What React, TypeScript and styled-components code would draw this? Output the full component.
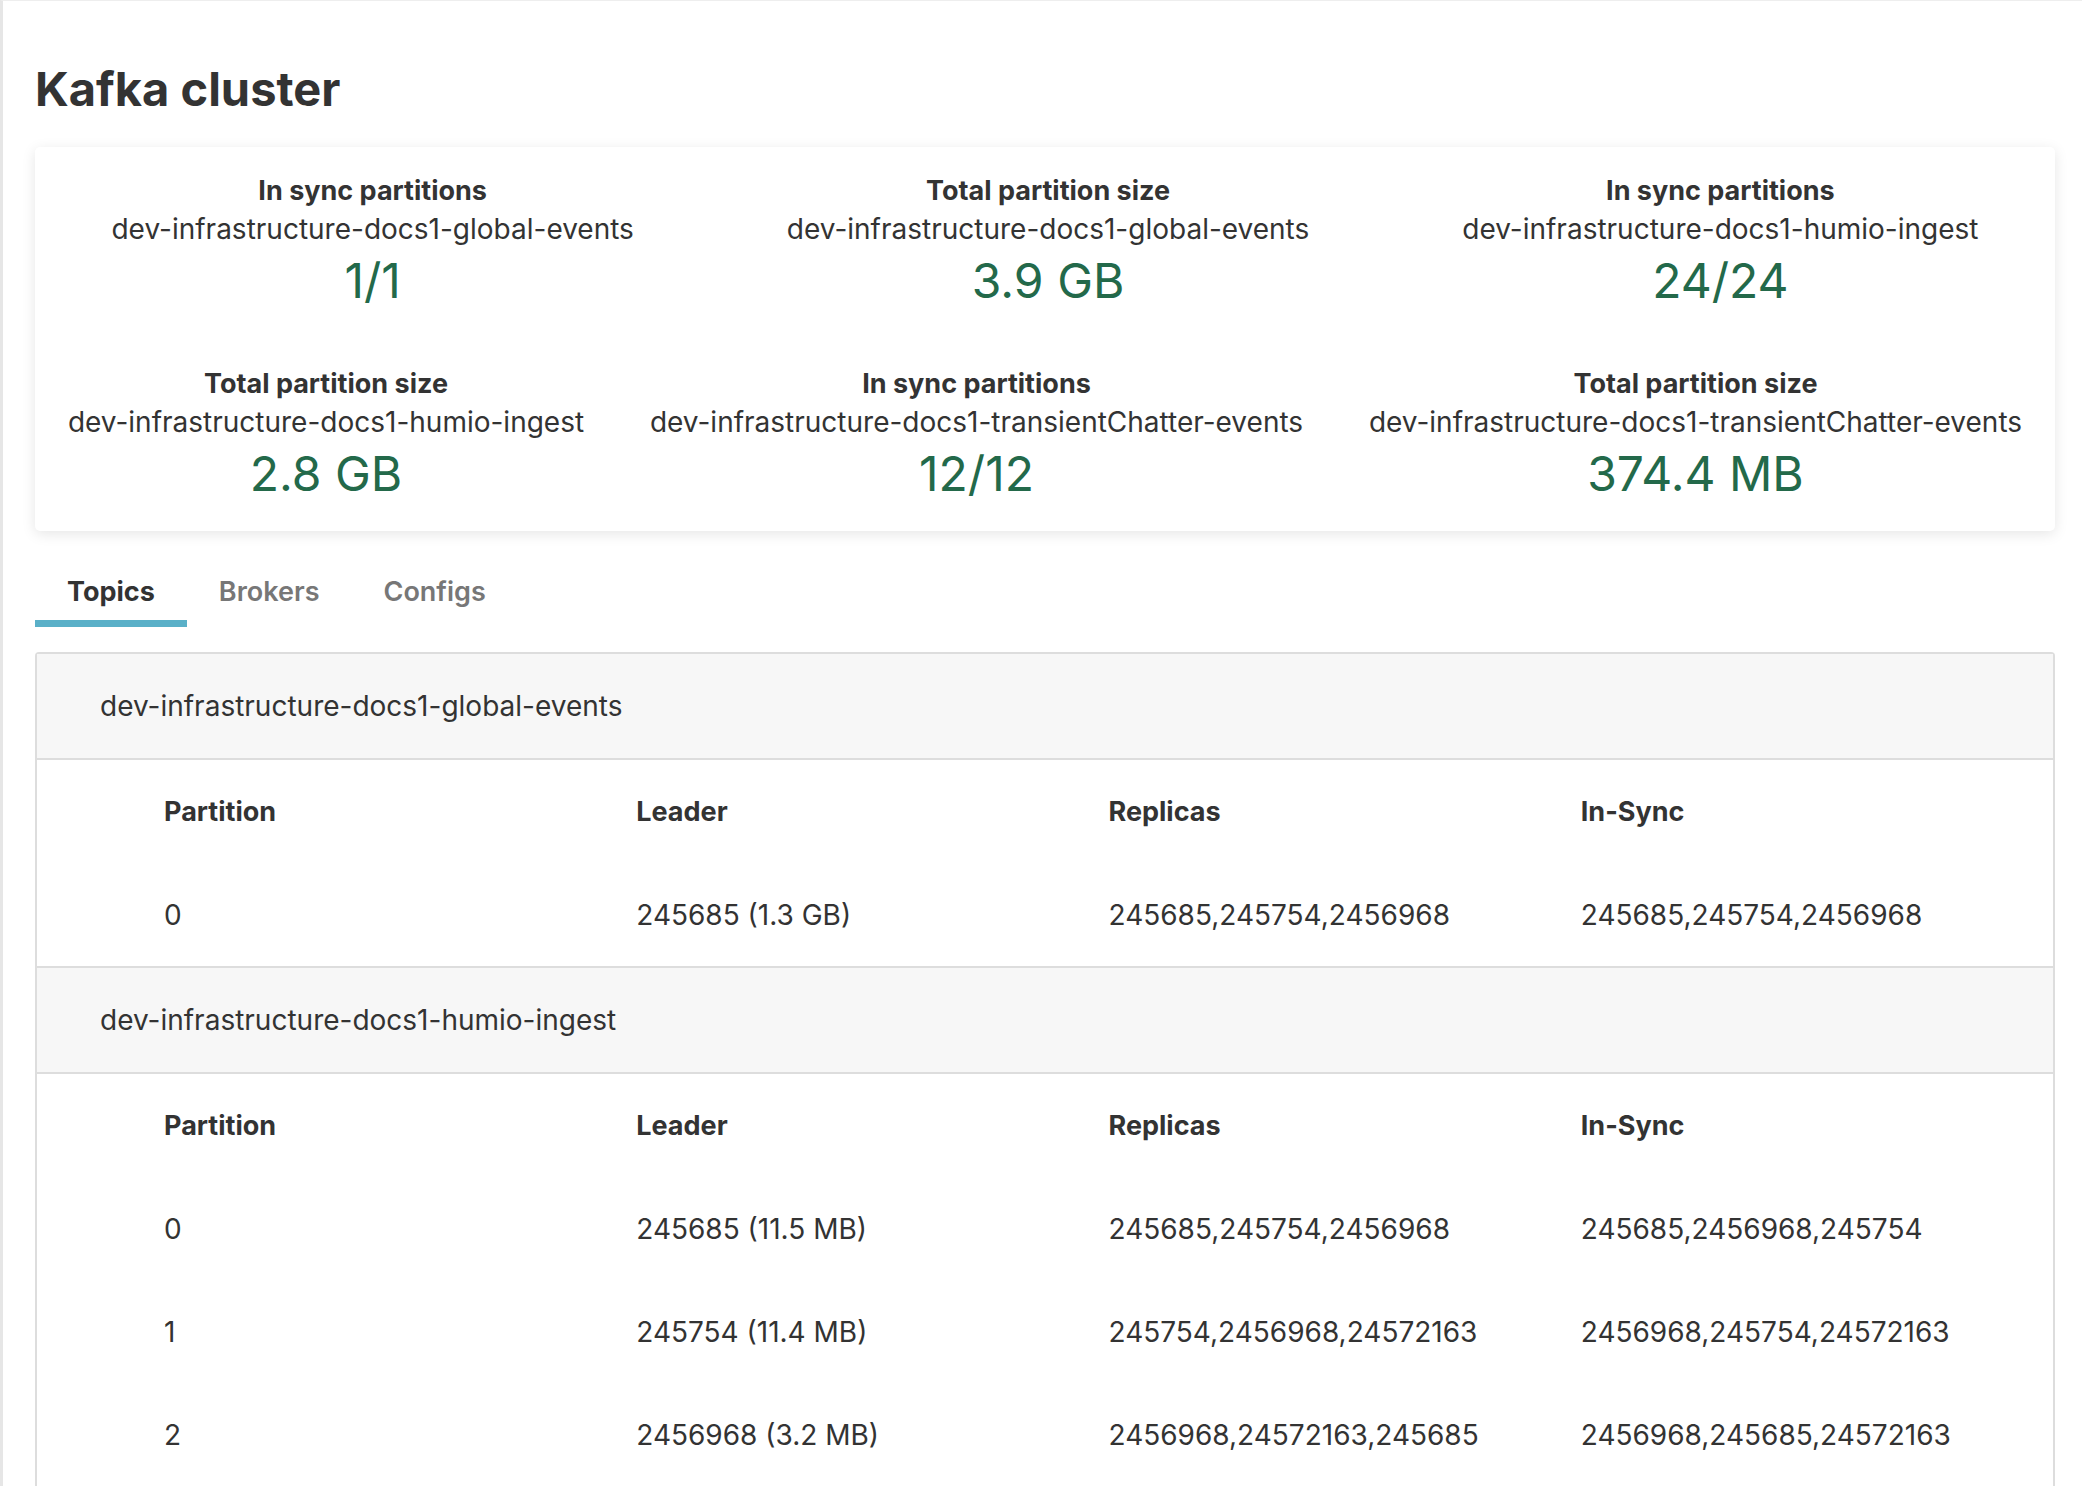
import React from "react";
import styled, { createGlobalStyle } from "styled-components";

const GlobalStyle = createGlobalStyle`
  body {
    margin: 0;
    background: #fff;
    font-family: Inter, "Noto Sans", "Liberation Sans", sans-serif;
    color: #333;
  }
`;

const Page = styled.div`
  min-height: 1486px;
  border-left: 3px solid #e6e6e6;
  border-top: 1px solid #eee;
  padding: 58px 27px 0 32px;
  box-sizing: border-box;
`;

const Title = styled.h1`
  margin: 0 0 28px;
  font-size: 47px;
  line-height: 60px;
  font-weight: 700;
  color: #333;
`;

const Card = styled.div`
  background: #fff;
  border-radius: 5px;
  box-shadow: 0 3px 14px rgba(0, 0, 0, 0.1);
  padding: 26px 0 25px;
  display: flex;
  flex-direction: column;
  gap: 53px;
`;

const StatRow = styled.div`
  display: flex;
  justify-content: space-around;
`;

const Stat = styled.div`
  display: flex;
  flex-direction: column;
  align-items: center;
`;

const StatLabel = styled.div`
  font-size: 27px;
  line-height: 36px;
  font-weight: 700;
`;

const StatTopic = styled.div`
  font-size: 28px;
  line-height: 40px;
`;

const StatValue = styled.div`
  font-size: 48px;
  line-height: 64px;
  color: #23694a;
`;

const Tabs = styled.div`
  display: flex;
  margin-top: 29px;
`;

const Tab = styled.div<{ $active?: boolean }>`
  padding: 14px 32px 10px;
  font-size: 27px;
  line-height: 36px;
  font-weight: ${p => (p.$active ? 700 : 600)};
  color: ${p => (p.$active ? "#333" : "#777")};
  border-bottom: 7px solid ${p => (p.$active ? "#5ab0c8" : "transparent")};
`;

const Panel = styled.div`
  margin-top: 25px;
  border: 2px solid #ddd;
  border-bottom: none;
  border-radius: 4px 4px 0 0;
`;

const TopicHeader = styled.div`
  background: #f7f7f7;
  height: 104px;
  display: flex;
  align-items: center;
  padding-left: 63px;
  font-size: 28px;
  border-bottom: 2px solid #ddd;
`;

const Table = styled.div`
  padding-left: 127px;
  border-bottom: 2px solid #ddd;
`;

const Row = styled.div<{ $head?: boolean }>`
  display: grid;
  grid-template-columns: repeat(4, 1fr);
  height: 103px;
  align-items: center;
  font-size: ${p => (p.$head ? 27 : 28)}px;
  font-weight: ${p => (p.$head ? 700 : 400)};
`;

const stats = [
  [
    ["In sync partitions", "dev-infrastructure-docs1-global-events", "1/1"],
    ["Total partition size", "dev-infrastructure-docs1-global-events", "3.9 GB"],
    ["In sync partitions", "dev-infrastructure-docs1-humio-ingest", "24/24"],
  ],
  [
    ["Total partition size", "dev-infrastructure-docs1-humio-ingest", "2.8 GB"],
    ["In sync partitions", "dev-infrastructure-docs1-transientChatter-events", "12/12"],
    ["Total partition size", "dev-infrastructure-docs1-transientChatter-events", "374.4 MB"],
  ],
];

const topics = [
  {
    name: "dev-infrastructure-docs1-global-events",
    rows: [["0", "245685 (1.3 GB)", "245685,245754,2456968", "245685,245754,2456968"]],
  },
  {
    name: "dev-infrastructure-docs1-humio-ingest",
    rows: [
      ["0", "245685 (11.5 MB)", "245685,245754,2456968", "245685,2456968,245754"],
      ["1", "245754 (11.4 MB)", "245754,2456968,24572163", "2456968,245754,24572163"],
      ["2", "2456968 (3.2 MB)", "2456968,24572163,245685", "2456968,245685,24572163"],
    ],
  },
];

export default function App() {
  return (
    <>
      <GlobalStyle />
      <Page>
        <Title>Kafka cluster</Title>
        <Card>
          {stats.map((row, i) => (
            <StatRow key={i}>
              {row.map(([label, topic, value], j) => (
                <Stat key={j}>
                  <StatLabel>{label}</StatLabel>
                  <StatTopic>{topic}</StatTopic>
                  <StatValue>{value}</StatValue>
                </Stat>
              ))}
            </StatRow>
          ))}
        </Card>
        <Tabs>
          <Tab $active>Topics</Tab>
          <Tab>Brokers</Tab>
          <Tab>Configs</Tab>
        </Tabs>
        <Panel>
          {topics.map(t => (
            <React.Fragment key={t.name}>
              <TopicHeader>{t.name}</TopicHeader>
              <Table>
                <Row $head>
                  <div>Partition</div>
                  <div>Leader</div>
                  <div>Replicas</div>
                  <div>In-Sync</div>
                </Row>
                {t.rows.map((r, i) => (
                  <Row key={i}>
                    {r.map((c, j) => (
                      <div key={j}>{c}</div>
                    ))}
                  </Row>
                ))}
              </Table>
            </React.Fragment>
          ))}
        </Panel>
      </Page>
    </>
  );
}
